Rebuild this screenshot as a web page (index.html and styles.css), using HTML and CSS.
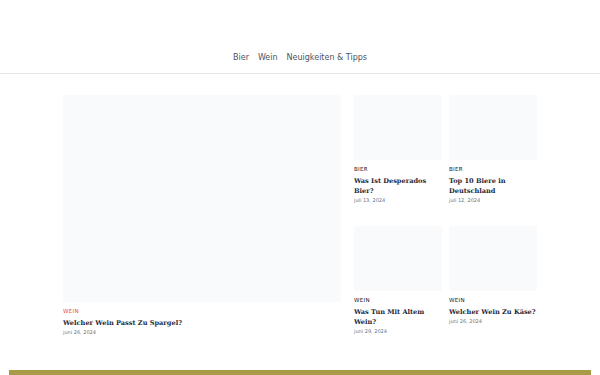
FILE: index.html
```html
<!DOCTYPE html>
<html lang="de">
  <head>
    <meta charset="UTF-8" />
    <meta name="viewport" content="width=device-width, initial-scale=1.0" />
    <title>Bier &amp; Wein</title>
    <link rel="stylesheet" href="styles.css">
  </head>
  <body>
    <header class="site-header">
      <nav class="main-nav">
        <a href="#">Bier</a>
        <a href="#">Wein</a>
        <a href="#">Neuigkeiten &amp; Tipps</a>
      </nav>
    </header>

    <main class="posts">
      <article class="post post-big">
        <div class="thumb"></div>
        <div class="cat cat-red">WEIN</div>
        <h2 class="title">Welcher Wein Passt Zu Spargel?</h2>
        <div class="date">juni 26, 2024</div>
      </article>

      <div class="side-grid">
        <article class="post">
          <div class="thumb"></div>
          <div class="cat">BIER</div>
          <h2 class="title">Was Ist Desperados Bier?</h2>
          <div class="date">juli 13, 2024</div>
        </article>
        <article class="post">
          <div class="thumb"></div>
          <div class="cat">BIER</div>
          <h2 class="title">Top 10 Biere in Deutschland</h2>
          <div class="date">juli 12, 2024</div>
        </article>
        <article class="post">
          <div class="thumb"></div>
          <div class="cat">WEIN</div>
          <h2 class="title">Was Tun Mit Altem Wein?</h2>
          <div class="date">juni 29, 2024</div>
        </article>
        <article class="post">
          <div class="thumb"></div>
          <div class="cat">WEIN</div>
          <h2 class="title">Welcher Wein Zu Käse?</h2>
          <div class="date">juni 26, 2024</div>
        </article>
      </div>
    </main>

    <div class="footer-bar"></div>
  </body>
</html>
```

FILE: styles.css
```css
body {
  margin: 0;
  font-family: "DejaVu Sans", sans-serif;
  background: #fff;
  color: #1f2937;
}
.site-header {
  height: 73px;
  border-bottom: 1px solid #e5e7eb;
  display: flex;
  align-items: flex-end;
  justify-content: center;
}
.main-nav {
  display: flex;
  gap: 9px;
  padding-bottom: 11px;
}
.main-nav a {
  font-size: 8px;
  color: #4b5563;
  text-decoration: none;
}
.posts {
  width: 474px;
  margin: 21px auto 0;
  display: grid;
  grid-template-columns: 278px 1fr;
  gap: 13px;
}
.side-grid {
  display: grid;
  grid-template-columns: 1fr 1fr;
  column-gap: 7px;
  row-gap: 23px;
  align-content: start;
}
.thumb {
  height: 65px;
  background: #f9fafb;
  border-radius: 2px;
}
.post-big .thumb {
  height: 207px;
}
.cat {
  margin-top: 6px;
  font-size: 5.5px;
  letter-spacing: 0.3px;
  color: #111827;
}
.cat-red {
  color: #ef4444;
}
.title {
  margin: 4px 0 1px;
  font-family: "DejaVu Serif", serif;
  font-weight: bold;
  font-size: 6.6px;
  line-height: 10px;
  color: #1f2937;
}
.date {
  font-size: 5px;
  color: #6b7280;
}
.footer-bar {
  margin: 35px 9px 0;
  height: 10px;
  background: #a89b48;
}
```
